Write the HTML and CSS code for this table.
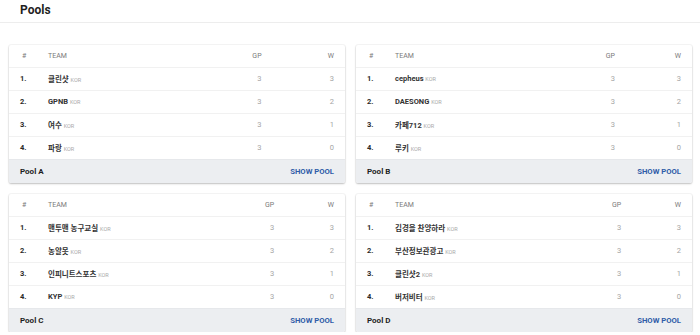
FILE: index.html
```html
<!DOCTYPE html>
<html lang="ko">
<head>
<meta charset="utf-8">
<title>Pools</title>
<link rel="stylesheet" href="styles.css">
</head>
<body>
<header class="top"><h1 class="title">Pools</h1></header>
<main class="grid">
  <section class="card">
    <table class="pool">
      <thead><tr><th class="rank">#</th><th class="team">TEAM</th><th class="num gp">GP</th><th class="num w">W</th></tr></thead>
      <tbody>
        <tr><td class="rank">1.</td><td class="team">클린샷 <span class="cc">KOR</span></td><td class="num gp">3</td><td class="num w">3</td></tr>
        <tr><td class="rank">2.</td><td class="team">GPNB <span class="cc">KOR</span></td><td class="num gp">3</td><td class="num w">2</td></tr>
        <tr><td class="rank">3.</td><td class="team">여수 <span class="cc">KOR</span></td><td class="num gp">3</td><td class="num w">1</td></tr>
        <tr><td class="rank">4.</td><td class="team">파랑 <span class="cc">KOR</span></td><td class="num gp">3</td><td class="num w">0</td></tr>
      </tbody>
    </table>
    <footer class="foot"><span class="name">Pool A</span><a class="show">SHOW POOL</a></footer>
  </section>
  <section class="card">
    <table class="pool">
      <thead><tr><th class="rank">#</th><th class="team">TEAM</th><th class="num gp">GP</th><th class="num w">W</th></tr></thead>
      <tbody>
        <tr><td class="rank">1.</td><td class="team">cepheus <span class="cc">KOR</span></td><td class="num gp">3</td><td class="num w">3</td></tr>
        <tr><td class="rank">2.</td><td class="team">DAESONG <span class="cc">KOR</span></td><td class="num gp">3</td><td class="num w">2</td></tr>
        <tr><td class="rank">3.</td><td class="team">카페712 <span class="cc">KOR</span></td><td class="num gp">3</td><td class="num w">1</td></tr>
        <tr><td class="rank">4.</td><td class="team">루키 <span class="cc">KOR</span></td><td class="num gp">3</td><td class="num w">0</td></tr>
      </tbody>
    </table>
    <footer class="foot"><span class="name">Pool B</span><a class="show">SHOW POOL</a></footer>
  </section>
  <section class="card">
    <table class="pool">
      <thead><tr><th class="rank">#</th><th class="team">TEAM</th><th class="num gp">GP</th><th class="num w">W</th></tr></thead>
      <tbody>
        <tr><td class="rank">1.</td><td class="team">맨투맨 농구교실 <span class="cc">KOR</span></td><td class="num gp">3</td><td class="num w">3</td></tr>
        <tr><td class="rank">2.</td><td class="team">농알못 <span class="cc">KOR</span></td><td class="num gp">3</td><td class="num w">2</td></tr>
        <tr><td class="rank">3.</td><td class="team">인피니트스포츠 <span class="cc">KOR</span></td><td class="num gp">3</td><td class="num w">1</td></tr>
        <tr><td class="rank">4.</td><td class="team">KYP <span class="cc">KOR</span></td><td class="num gp">3</td><td class="num w">0</td></tr>
      </tbody>
    </table>
    <footer class="foot"><span class="name">Pool C</span><a class="show">SHOW POOL</a></footer>
  </section>
  <section class="card">
    <table class="pool">
      <thead><tr><th class="rank">#</th><th class="team">TEAM</th><th class="num gp">GP</th><th class="num w">W</th></tr></thead>
      <tbody>
        <tr><td class="rank">1.</td><td class="team">김경을 찬양하라 <span class="cc">KOR</span></td><td class="num gp">3</td><td class="num w">3</td></tr>
        <tr><td class="rank">2.</td><td class="team">부산정보관광고 <span class="cc">KOR</span></td><td class="num gp">3</td><td class="num w">2</td></tr>
        <tr><td class="rank">3.</td><td class="team">클린샷2 <span class="cc">KOR</span></td><td class="num gp">3</td><td class="num w">1</td></tr>
        <tr><td class="rank">4.</td><td class="team">버저비터 <span class="cc">KOR</span></td><td class="num gp">3</td><td class="num w">0</td></tr>
      </tbody>
    </table>
    <footer class="foot"><span class="name">Pool D</span><a class="show">SHOW POOL</a></footer>
  </section>
</main>
</body>
</html>
```
FILE: styles.css
```css
* { box-sizing: border-box; }
body {
  margin: 0;
  background: #fff;
  font-family: Roboto, "Noto Sans CJK KR", sans-serif;
  color: #222;
}
.top {
  height: 23px;
  padding: 0 20px;
  border-bottom: 1px solid #ededed;
}
.title {
  margin: 0;
  font-size: 12px;
  font-weight: 700;
  line-height: 21px;
  color: #1f1f1f;
}
.grid {
  display: grid;
  grid-template-columns: 1fr 1fr;
  column-gap: 11px;
  row-gap: 11px;
  padding: 22px 8px 0 9px;
}
.card {
  background: #fff;
  border-radius: 2px;
  box-shadow: 0 0 0 1px rgba(0,0,0,0.035), 0 1px 2px rgba(0,0,0,0.22);
  overflow: hidden;
}
.pool {
  width: 100%;
  border-collapse: collapse;
}
.pool th {
  height: 22px;
  padding: 0;
  font-size: 7px;
  font-weight: 400;
  color: #7a7a7a;
  text-align: left;
}
.pool td {
  height: 23px;
  padding: 0;
  border-top: 1px solid #f1f1f1;
  font-size: 7.5px;
}
.pool .rank {
  width: 39px;
  padding-left: 11px;
}
.pool td.rank { font-weight: 700; color: #2a2a2a; }
.pool th.rank { padding-left: 13px; }
.pool td.team {
  font-weight: 700;
  color: #333;
  font-size: 7.5px;
}
.cc {
  font-size: 5.5px;
  font-weight: 400;
  color: #a9a9a9;
}
.pool .num {
  text-align: right;
  color: #a4a4a4;
}
.pool th.num { color: #7a7a7a; }
.pool .gp { padding-left: 76px; }
.pool .w { padding-left: 29px; padding-right: 11px; }
.foot {
  height: 24px;
  display: flex;
  align-items: center;
  justify-content: space-between;
  padding: 0 11px;
  background: #eceef1;
  border-top: 1px solid #e6e8eb;
}
.name {
  font-size: 8px;
  font-weight: 700;
  color: #1e1e1e;
}
.show {
  font-size: 7.7px;
  font-weight: 700;
  color: #2f5ca8;
}
```
